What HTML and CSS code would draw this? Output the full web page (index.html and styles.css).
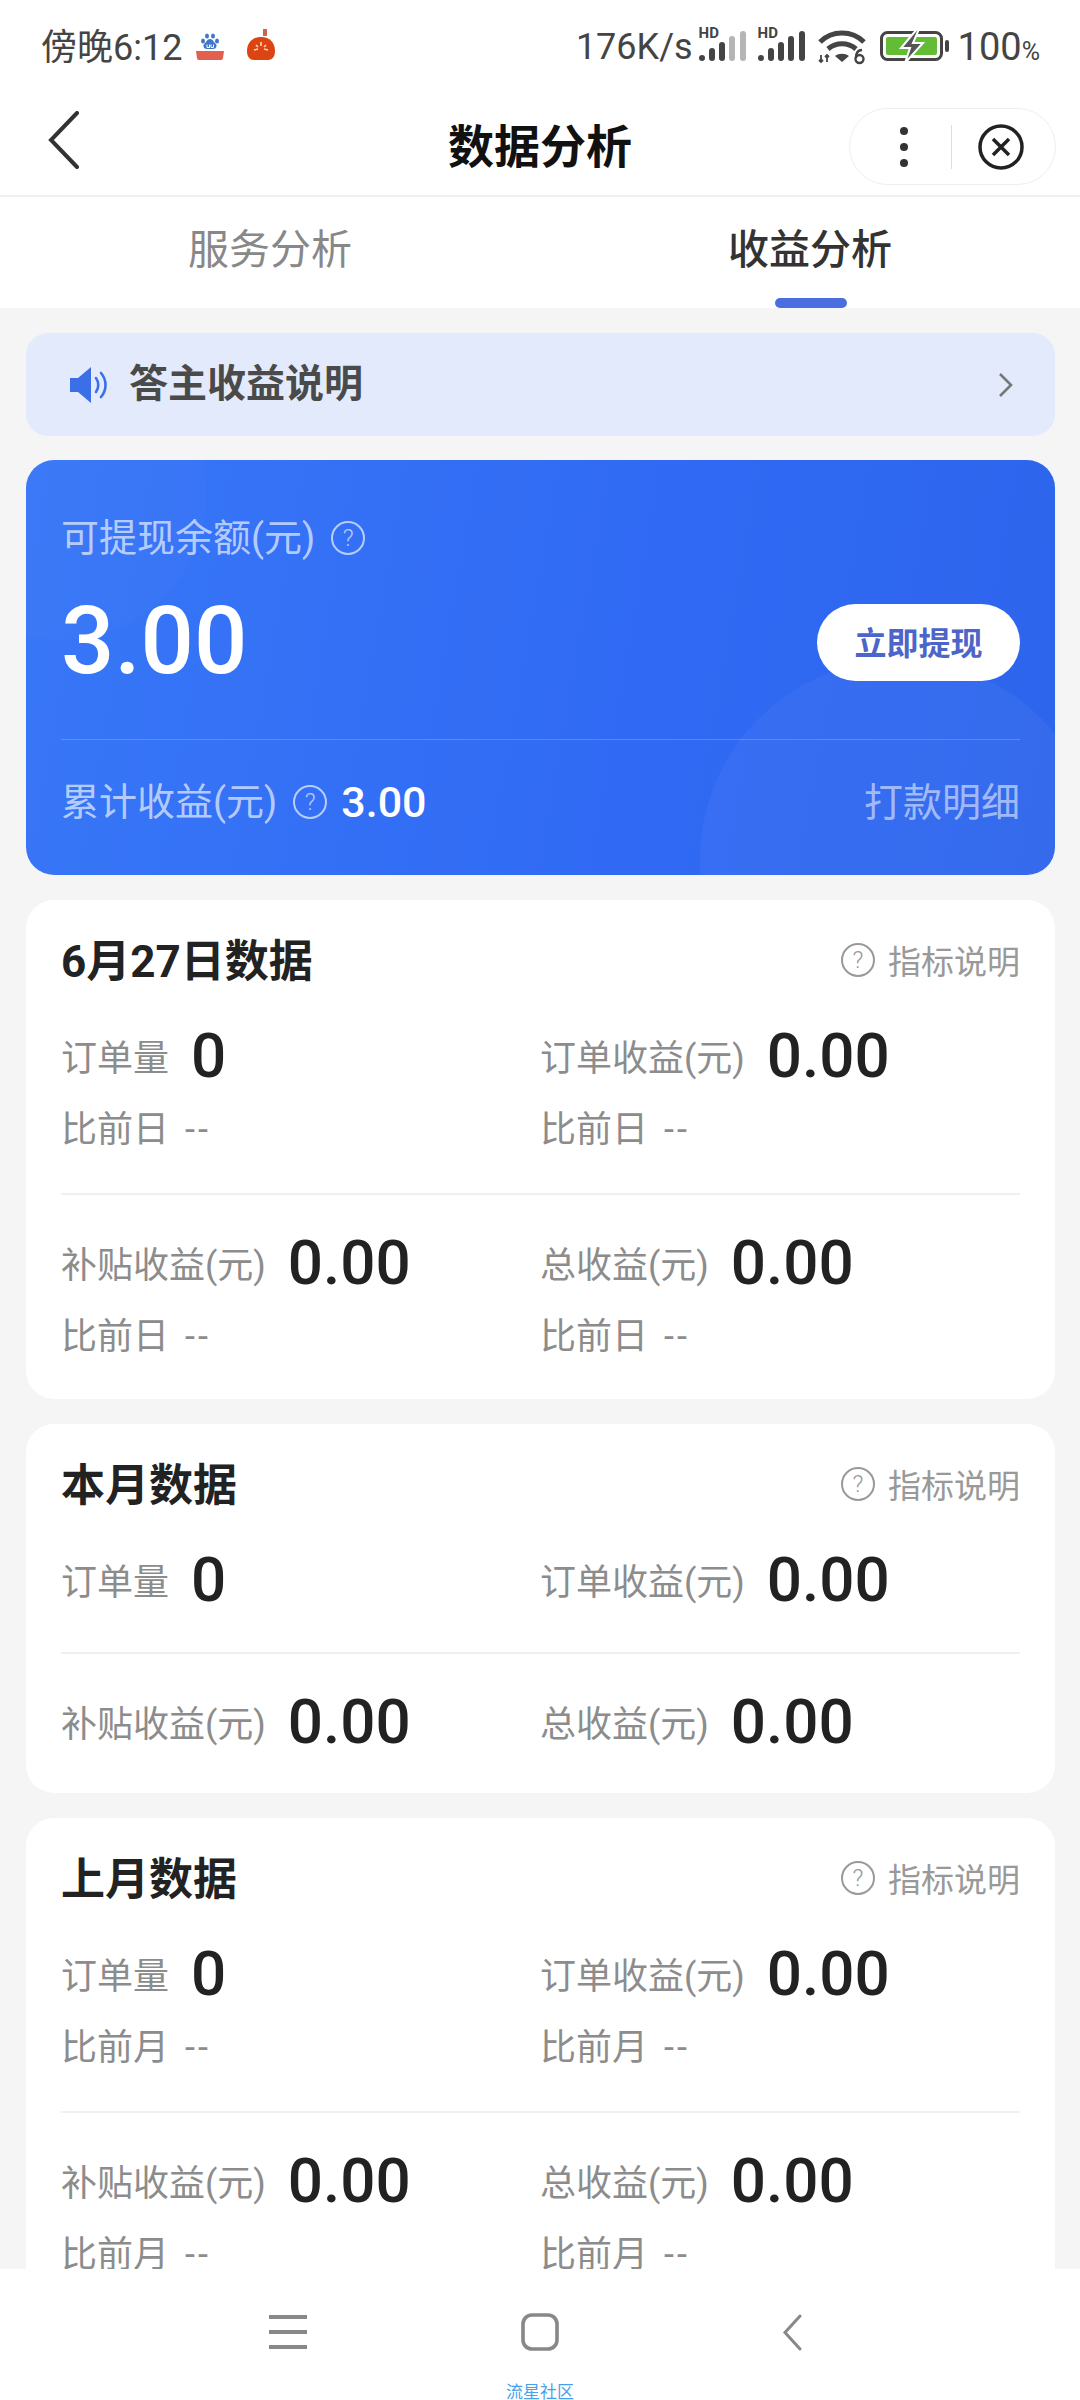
FILE: index.html
```html
<!DOCTYPE html>
<html lang="zh-CN">

<head>
    <meta charset="UTF-8">
    <meta name="viewport" content="width=device-width, initial-scale=1.0">
    <title>数据分析</title>
    <link rel="stylesheet" href="styles.css">
</head>

<body>
    <div class="app">
        <div class="status-bar">
            <div class="status-left">
                <span class="clock">傍晚6:12</span>
                <svg class="app-icon" width="30" height="30" viewBox="0 0 30 30">
                    <ellipse cx="8" cy="11" rx="2" ry="2.500" fill="#3f78c8" />
                    <ellipse cx="12" cy="6" rx="2" ry="2.500" fill="#3f78c8" />
                    <ellipse cx="18" cy="6" rx="2" ry="2.500" fill="#3f78c8" />
                    <ellipse cx="22" cy="11" rx="2" ry="2.500" fill="#3f78c8" />
                    <path d="M15 9c-3 0-3.500 3-5.500 4.500-2 2-1 5.500 2.500 5.500h6c3.500 0 4.500-3.500 2.500-5.500C18.500 12 18 9 15 9z" fill="#3f78c8" />
                    <path d="M12 14.500v3h2.500v-3M16 14.500v3h2.500v-3" fill="none" stroke="#fff" stroke-width="1" />
                    <path d="M1 21h28l-1 7a2 2 0 0 1-2 2H4a2 2 0 0 1-2-2z" fill="#e2604f" />
                </svg>
                <svg class="app-icon tomato" width="30" height="32" viewBox="0 0 30 32">
                    <rect x="17" y="0" width="4" height="7" fill="#c9674e" />
                    <path d="M15 8c9 0 14 6 14 14 0 6-3 9-7 9H8c-4 0-7-3-7-9C1 14 6 8 15 8z" fill="#dd4414" />
                    <path d="M15 13v4M8 21l4-1M22 21l-4-1M10 16l2 2M20 16l-2 2" stroke="#fbd9b5" stroke-width="1.600" />
                </svg>
            </div>
            <div class="status-right">
                <span class="speed">176K/s</span>
                <div class="signal">
                    <span class="hd">HD</span>
                    <svg width="48" height="32" viewBox="0 0 48 32">
                        <rect x="0" y="24" width="6" height="6" rx="3" fill="#444" />
                        <rect x="10" y="17" width="6" height="13" rx="3" fill="#444" />
                        <rect x="20" y="11" width="6" height="19" rx="3" fill="#444" />
                        <rect x="30" y="5" width="6" height="25" rx="3" fill="#b5b5b5" />
                        <rect x="41" y="0" width="6" height="30" rx="3" fill="#b5b5b5" />
                    </svg>
                </div>
                <div class="signal">
                    <span class="hd">HD</span>
                    <svg width="48" height="32" viewBox="0 0 48 32">
                        <rect x="0" y="24" width="6" height="6" rx="3" fill="#444" />
                        <rect x="10" y="17" width="6" height="13" rx="3" fill="#444" />
                        <rect x="20" y="11" width="6" height="19" rx="3" fill="#444" />
                        <rect x="30" y="5" width="6" height="25" rx="3" fill="#444" />
                        <rect x="41" y="0" width="6" height="30" rx="3" fill="#444" />
                    </svg>
                </div>
                <svg class="wifi" width="48" height="36" viewBox="0 0 48 36">
                    <path d="M2 13C14 1 34 1 46 13" fill="none" stroke="#444" stroke-width="5" />
                    <path d="M10 20c8-7 20-7 28 0" fill="none" stroke="#444" stroke-width="5" />
                    <path d="M17 27c4-3 10-3 14 0l-7 6z" fill="#444" />
                    <path d="M3 26v7M1 31l2 2 2-2M9 33v-7M7 28l2-2 2 2" fill="none" stroke="#444" stroke-width="1.800" />
                    <circle cx="41.500" cy="30" r="4" fill="none" stroke="#444" stroke-width="2.400" />
                    <path d="M38 29c0-5 2-8 6-8" fill="none" stroke="#444" stroke-width="2.400" />
                </svg>
                <svg class="battery" width="71" height="34" viewBox="0 0 71 34">
                    <rect x="1.500" y="3.500" width="60" height="27" rx="6" fill="none" stroke="#444" stroke-width="3" />
                    <rect x="6" y="8" width="51" height="18" rx="2" fill="#63bd34" />
                    <path d="M37 0L21 19h9l-5 15 18-20h-10l6-14z" fill="#555" stroke="#fff" stroke-width="2" />
                    <rect x="65" y="11" width="4" height="12" rx="2" fill="#444" />
                </svg>
                <span class="percent">100<small>%</small></span>
            </div>
        </div>

        <div class="nav-bar">
            <svg class="nav-back" width="32" height="58" viewBox="0 0 32 58">
                <path d="M29 2L3 29l26 27" fill="none" stroke="#333" stroke-width="4" stroke-linecap="round" />
            </svg>
            <h1>数据分析</h1>
            <div class="capsule">
                <svg class="capsule-dots" width="8" height="40" viewBox="0 0 8 40">
                    <circle cx="4" cy="4" r="4" fill="#333" />
                    <circle cx="4" cy="20" r="4" fill="#333" />
                    <circle cx="4" cy="36" r="4" fill="#333" />
                </svg>
                <span class="capsule-line"></span>
                <svg class="capsule-close" width="46" height="46" viewBox="0 0 46 46">
                    <circle cx="23" cy="23" r="21" fill="none" stroke="#222" stroke-width="3.500" />
                    <path d="M15 15l16 16M31 15L15 31" fill="none" stroke="#222" stroke-width="3.500" />
                </svg>
            </div>
        </div>

        <div class="tabs">
            <div class="tab">
                <span>服务分析</span>
            </div>
            <div class="tab active">
                <span>收益分析</span>
                <i class="tab-bar"></i>
            </div>
        </div>

        <div class="content">
            <div class="notice">
                <svg width="38" height="36" viewBox="0 0 38 36">
                    <path d="M0 11h8L21 0v36L8 25H0z" fill="#3a6fe8" />
                    <path d="M26 11c3 4 3 10 0 14M31 6c6 7 6 17 0 24" fill="none" stroke="#3a6fe8" stroke-width="2.600" stroke-linecap="round" />
                </svg>
                <span class="notice-text">答主收益说明</span>
                <svg class="notice-arrow" width="15" height="26" viewBox="0 0 15 26">
                    <path d="M2 2l11 11L2 24" fill="none" stroke="#777" stroke-width="2.600" />
                </svg>
            </div>

            <div class="wallet">
                <i class="wallet-circle top"></i>
                <i class="wallet-circle bottom"></i>
                <div class="wallet-label">可提现余额(元)<span class="help">?</span></div>
                <div class="wallet-main">
                    <span class="wallet-amount">3.00</span>
                    <span class="wallet-btn">立即提现</span>
                </div>
                <div class="wallet-foot">
                    <div class="wallet-total">累计收益(元)<span class="help">?</span><b>3.00</b></div>
                    <span class="wallet-detail">打款明细</span>
                </div>
            </div>

            <div class="card">
                <div class="card-head">
                    <h2>6月27日数据</h2>
                    <div class="card-tip"><span class="help">?</span>指标说明</div>
                </div>
                <div class="metrics">
                    <div class="metric"><div class="metric-main"><span>订单量</span><b>0</b></div><p>比前日<span>--</span></p></div>
                    <div class="metric"><div class="metric-main"><span>订单收益(元)</span><b>0.00</b></div><p>比前日<span>--</span></p></div>
                </div>
                <div class="metrics second">
                    <div class="metric"><div class="metric-main"><span>补贴收益(元)</span><b>0.00</b></div><p>比前日<span>--</span></p></div>
                    <div class="metric"><div class="metric-main"><span>总收益(元)</span><b>0.00</b></div><p>比前日<span>--</span></p></div>
                </div>
            </div>

            <div class="card">
                <div class="card-head">
                    <h2>本月数据</h2>
                    <div class="card-tip"><span class="help">?</span>指标说明</div>
                </div>
                <div class="metrics">
                    <div class="metric"><div class="metric-main"><span>订单量</span><b>0</b></div></div>
                    <div class="metric"><div class="metric-main"><span>订单收益(元)</span><b>0.00</b></div></div>
                </div>
                <div class="metrics second">
                    <div class="metric"><div class="metric-main"><span>补贴收益(元)</span><b>0.00</b></div></div>
                    <div class="metric"><div class="metric-main"><span>总收益(元)</span><b>0.00</b></div></div>
                </div>
            </div>

            <div class="card">
                <div class="card-head">
                    <h2>上月数据</h2>
                    <div class="card-tip"><span class="help">?</span>指标说明</div>
                </div>
                <div class="metrics">
                    <div class="metric"><div class="metric-main"><span>订单量</span><b>0</b></div><p>比前月<span>--</span></p></div>
                    <div class="metric"><div class="metric-main"><span>订单收益(元)</span><b>0.00</b></div><p>比前月<span>--</span></p></div>
                </div>
                <div class="metrics second">
                    <div class="metric"><div class="metric-main"><span>补贴收益(元)</span><b>0.00</b></div><p>比前月<span>--</span></p></div>
                    <div class="metric"><div class="metric-main"><span>总收益(元)</span><b>0.00</b></div><p>比前月<span>--</span></p></div>
                </div>
            </div>
        </div>

        <div class="bottom-nav">
            <div class="bottom-icons">
                <svg width="38" height="36" viewBox="0 0 38 36">
                    <path d="M0 3h38M0 18h38M0 33h38" stroke="#888" stroke-width="4" />
                </svg>
                <svg width="38" height="38" viewBox="0 0 38 38">
                    <rect x="2" y="2" width="34" height="34" rx="9" fill="none" stroke="#888" stroke-width="3.600" />
                </svg>
                <svg width="20" height="37" viewBox="0 0 20 37">
                    <path d="M18 2L3 18.500l15 16.500" fill="none" stroke="#888" stroke-width="3" stroke-linecap="round" />
                </svg>
            </div>
            <div class="watermark">流星社区</div>
        </div>
    </div>
</body>

</html>
```

FILE: styles.css
```css
* {
    box-sizing: border-box;
}

body {
    margin: 0;
    font-family: Roboto, 'Noto Sans CJK SC', sans-serif;
    color: #333;
    background-color: #f5f5f5;
}

.app {
    width: 1080px;
    height: 2400px;
    display: flex;
    flex-direction: column;
    overflow: hidden;
}

/* status bar */
.status-bar {
    height: 90px;
    flex: none;
    padding: 0 40px 0 41px;
    display: flex;
    align-items: center;
    justify-content: space-between;
    background-color: #fff;
    color: #444;
}

.status-left,
.status-right {
    display: flex;
    align-items: center;
}

.clock {
    font-size: 36px;
    margin-top: -2px;
}

.app-icon {
    margin-left: 13px;
}

.app-icon.tomato {
    margin-left: 21px;
}

.speed {
    font-size: 36px;
    margin-top: 3px;
}

.signal {
    position: relative;
    width: 48px;
    height: 32px;
    margin-left: 6px;
    margin-top: 4px;
}

.signal + .signal {
    margin-left: 11px;
}

.hd {
    position: absolute;
    left: 0;
    top: -6px;
    font-size: 15px;
    font-weight: 700;
    line-height: 16px;
    background-color: #fff;
    padding-right: 1px;
}

.wifi {
    margin-left: 12px;
    margin-top: 4px;
}

.battery {
    margin-left: 14px;
    margin-top: 2px;
}

.percent {
    font-size: 38px;
    margin-left: 7px;
    margin-top: 3px;
}

.percent small {
    font-size: 25px;
}

/* nav */
.nav-bar {
    height: 107px;
    flex: none;
    padding: 0 24px;
    display: grid;
    grid-template-columns: 1fr auto 1fr;
    align-items: center;
    background-color: #fff;
    border-bottom: 2px solid #f0f0f0;
}

.nav-back {
    margin: -6px 0 0 24px;
}

.nav-bar h1 {
    margin: 0;
    font-size: 46px;
    font-weight: 700;
    color: #111;
}

.capsule {
    justify-self: end;
    width: 207px;
    height: 77px;
    margin-top: 8px;
    display: flex;
    align-items: center;
    border: 1px solid #eee;
    border-radius: 39px;
}

.capsule-dots {
    margin-left: 50px;
}

.capsule-line {
    width: 1px;
    height: 44px;
    margin-left: 43px;
    background-color: #ddd;
}

.capsule-close {
    margin-left: 26px;
}

/* tabs */
.tabs {
    height: 111px;
    flex: none;
    display: flex;
    background-color: #fff;
}

.tab {
    width: 540px;
    padding-top: 28px;
    display: flex;
    flex-direction: column;
    align-items: center;
    font-size: 41px;
    line-height: 50px;
    color: #888;
}

.tab.active {
    font-weight: 500;
    color: #333;
}

.tab-bar {
    width: 72px;
    height: 10px;
    margin-top: auto;
    margin-left: 2px;
    border-radius: 5px;
    background-color: #4a6ee0;
}

/* content */
.content {
    flex: 1;
    min-height: 0;
    overflow: hidden;
    padding: 25px 25px 0 26px;
}

.notice {
    height: 103px;
    padding: 0 42px 0 44px;
    display: flex;
    align-items: center;
    border-radius: 22px;
    background-color: #e3eafc;
}

.notice-text {
    margin: 0 0 10px 21px;
    font-size: 39px;
    font-weight: 700;
    color: #4a4a4a;
}

.notice-arrow {
    margin-left: auto;
}

.wallet {
    position: relative;
    height: 415px;
    margin-top: 24px;
    padding: 53px 35px 0 35px;
    border-radius: 28px;
    overflow: hidden;
    color: #fff;
    background: linear-gradient(100deg, #3877f7 0%, #306af4 60%, #2d64ec 100%);
}

.wallet-circle {
    position: absolute;
    border-radius: 50%;
}

.wallet-circle.top {
    left: -110px;
    top: -110px;
    width: 290px;
    height: 290px;
    background-color: rgba(255, 255, 255, 0.02);
}

.wallet-circle.bottom {
    left: 674px;
    top: 200px;
    width: 400px;
    height: 400px;
    background-color: rgba(255, 255, 255, 0.04);
}

.wallet-label,
.wallet-total {
    position: relative;
    display: flex;
    align-items: center;
    font-size: 38px;
    line-height: 50px;
    color: rgba(255, 255, 255, 0.65);
}

.wallet-main {
    position: relative;
    height: 95px;
    margin-top: 31px;
    display: flex;
    align-items: center;
    justify-content: space-between;
}

.wallet-amount {
    font-size: 94px;
    font-weight: 500;
    line-height: 95px;
    color: #fff;
}

.wallet-btn {
    width: 203px;
    height: 77px;
    margin-top: 2px;
    padding-bottom: 3px;
    display: flex;
    align-items: center;
    justify-content: center;
    border-radius: 39px;
    background-color: #fff;
    font-size: 32px;
    font-weight: 700;
    color: #4d65c9;
}

.wallet-foot {
    position: relative;
    height: 136px;
    margin-top: 50px;
    padding-top: 37px;
    display: flex;
    align-items: flex-start;
    justify-content: space-between;
    border-top: 1px solid rgba(255, 255, 255, 0.2);
}

.wallet-total b {
    margin-left: 14px;
    font-size: 43px;
    font-weight: 500;
    color: #fff;
}

.wallet-detail {
    font-size: 39px;
    line-height: 52px;
    color: rgba(255, 255, 255, 0.55);
}

.help {
    width: 34px;
    height: 34px;
    margin-left: 16px;
    display: inline-flex;
    align-items: center;
    justify-content: center;
    flex: none;
    border: 2px solid currentColor;
    border-radius: 50%;
    font-size: 24px;
    line-height: 1;
    font-weight: 300;
}

/* data cards */
.card {
    margin-top: 25px;
    padding: 40px 35px 42px;
    border-radius: 28px;
    background-color: #fff;
}

.card-head {
    display: flex;
    align-items: center;
    justify-content: space-between;
    height: 42px;
}

.card-head h2 {
    margin: -6px 0 0;
    font-size: 44px;
    font-weight: 700;
    color: #222;
}

.card-tip {
    display: flex;
    align-items: center;
    margin-top: -3px;
    font-size: 33px;
    color: #999;
}

.card-tip .help {
    margin: 0 13px 0 0;
}

.metrics {
    margin-top: 43px;
    display: grid;
    grid-template-columns: 479px 1fr;
}

.metrics.second {
    margin-top: 43px;
    padding-top: 37px;
    border-top: 2px solid #f0f0f0;
}

.metric-main {
    height: 60px;
    display: flex;
    align-items: center;
}

.metric-main span {
    font-size: 36px;
    color: #8c8c8c;
}

.metric-main b {
    margin-left: 22px;
    font-size: 62px;
    font-weight: 500;
    color: #222;
}

.metric p {
    margin: 25px 0 0;
    font-size: 36px;
    line-height: 40px;
    color: #8c8c8c;
}

.metric p span {
    margin-left: 16px;
    letter-spacing: 3px;
}

/* bottom nav */
.bottom-nav {
    height: 131px;
    flex: none;
    padding-top: 44px;
    overflow: hidden;
    background-color: #fff;
}

.bottom-icons {
    display: grid;
    grid-template-columns: repeat(3, 252px);
    justify-content: center;
    justify-items: center;
    align-items: center;
}

.watermark {
    margin-top: 33px;
    text-align: center;
    font-size: 17px;
    line-height: 16px;
    color: #4a9fe8;
}
```
